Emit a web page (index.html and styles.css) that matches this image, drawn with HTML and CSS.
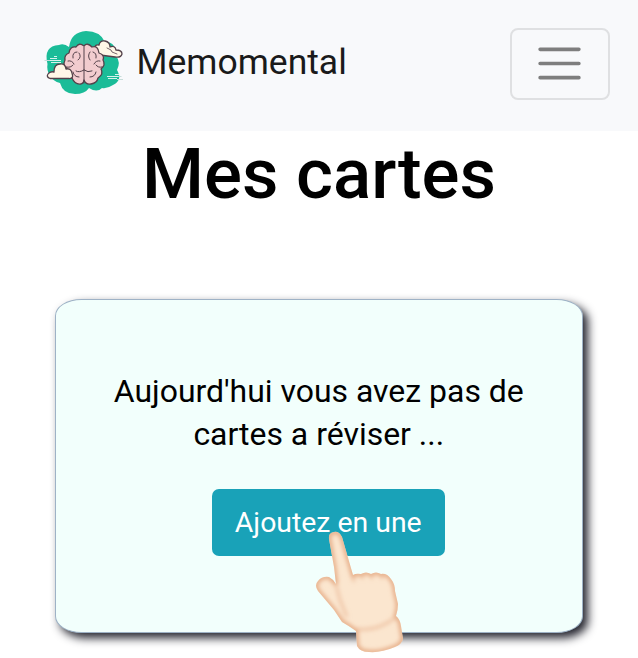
FILE: index.html
```html
<!DOCTYPE html>
<html lang="fr">
<head>
<meta charset="utf-8">
<title>Memomental</title>
<link rel="stylesheet" href="styles.css">
</head>
<body>
<header class="navbar">
  <a class="brand">
    <svg class="logo" viewBox="0 0 100 80" aria-hidden="true">
      <path fill="#1bbc98" d="M24 61C15 59 10 50 11.500 42Q7 24 23 23Q28 21 33 25Q35 10 50 9Q64 9 69 20Q80 19 80 34Q85 40 81 48Q87 58 77 63Q71 67 66 66Q61 71 53 66Q49 72 39 72Q27 72 24 61Z"/>
      <g stroke="#54414a" stroke-width="1.3" stroke-linejoin="round" stroke-linecap="round">
        <path fill="#fff7e7" d="M59 28Q58 22 63 23Q64 18 69 19Q74 20 74 25Q79 23 80 28Q86 28 86 32Q85 36 79 35L64 33Q59 32 59 28Z"/>
        <path fill="#f2cccf" d="M48 24Q43 20 40 25Q34 24 33 31Q28 33 29 38Q26 44 32 47Q31 54 36 56Q39 63 45 62Q48 61 48 58Q50 63 55 62Q61 61 62 56Q68 52 65 47Q70 43 67 38Q69 33 63 31Q62 23 56 25Q51 20 48 24Z"/>
        <path fill="none" stroke-width="1" d="M48 25V61M41 30Q36 30 37 36M43 31Q46 35 42 38M54 30Q51 34 54 38M57 30Q61 31 60 36M32 39Q36 38 38 42M30 45Q35 46 37 43M48 48Q43 51 40 49M48 48Q52 51 56 49M64 39Q60 38 58 42M66 45Q62 46 60 43M37 50Q38 55 43 55M60 50Q59 55 54 55"/>
        <path fill="#fff7e7" d="M14 56.500Q10 55 12 52Q14 49 18 50Q18 42 24 42Q29 41 30 47Q35 46 36 51Q38 57 33 56.500Z"/>
        <path fill="none" stroke-width=".8" d="M71 26L75 28L76 30L81 32"/>
      </g>
      <g fill="none" stroke-width="1">
        <path stroke="#c6dcd9" d="M8.500 38.500H14M82 54.500H85.500M81 57.500H87"/>
        <path stroke="#d8f2ec" d="M14 38.500H25M15 40.500H25M14 36.500H21M18 34.500H21M71 54.500H82M72 56.500H81M79 52.500H83"/>
      </g>
    </svg>
    <span class="brand-name">Memomental</span>
  </a>
  <button class="toggler" aria-label="Menu">
    <svg class="bars" viewBox="0 0 30 30" aria-hidden="true"><path stroke="#7e7e7e" stroke-linecap="round" stroke-miterlimit="10" stroke-width="2" d="M4 7h22M4 15h22M4 23h22"/></svg>
  </button>
</header>
<main>
  <h1 class="title">Mes cartes</h1>
  <section class="card">
    <p class="message">Aujourd'hui vous avez pas de<br>cartes a réviser ...</p>
    <a class="add">Ajoutez en une</a>
    <svg class="hand" viewBox="0 0 120 138" aria-hidden="true">
      <defs>
        <clipPath id="shape"><path id="outline" d="M29 19Q28 13 34 12Q39 11 42 17L53 55Q56 53 61 54Q66 51 71 54Q76 51 81 54Q87 53 91 59Q95 64 95 71L98 84Q98 90 96 96Q100 99 101 106L103 119Q102 124 95 127Q81 133 69 132Q60 132 57 126L56 111Q49 106 42 102L34 90L18 71Q14 65 18 61Q22 56 29 57Q33 59 36 64L34 47Z"/></clipPath>
        <filter id="soft" x="-20%" y="-20%" width="140%" height="140%"><feGaussianBlur stdDeviation="2.2"/></filter>
      </defs>
      <use href="#outline" fill="#fbe6cf"/>
      <g clip-path="url(#shape)">
        <g filter="url(#soft)" fill="none" stroke="#e5ab85">
          <use href="#outline" stroke-width="4.500"/>
          <path stroke-width="2.500" opacity=".65" d="M36 65L40 80L47 97M57 109Q77 112 96 97M53 55L54 62M61 54L63 59M71 54L72 59M81 54L82 59"/>
        </g>
      </g>
    </svg>
  </section>
</main>
</body>
</html>
```
FILE: styles.css
```css
* { box-sizing: border-box; }
body {
  margin: 0;
  height: 658px;
  overflow: hidden;
  background: #fff;
  color: #000;
  font-family: Roboto, "Liberation Sans", sans-serif;
}
.navbar {
  height: 131px;
  padding: 22px 28px 0 36px;
  display: flex;
  justify-content: space-between;
  align-items: flex-start;
  background: #f8f9fb;
}
.brand { display: flex; color: #1a1a1a; }
.logo { width: 100px; height: 80px; }
.brand-name {
  font-size: 35.5px;
  line-height: 53px;
  margin: 14px 0 0 0.5px;
}
.toggler {
  width: 100px;
  height: 72px;
  margin-top: 6px;
  padding: 0 1px 1px 0;
  display: flex;
  align-items: center;
  justify-content: center;
  border: 2px solid #dfe0e2;
  border-radius: 8px;
  background: transparent;
}
.bars { width: 53px; height: 53px; }
.title {
  margin: 0;
  font-size: 70.9px;
  font-weight: 500;
  line-height: 85px;
  text-align: center;
}
.card {
  position: relative;
  width: 527.5px;
  height: 334px;
  margin: 83px 0 0 55px;
  padding-top: 70px;
  display: flex;
  flex-direction: column;
  align-items: center;
  border: 1px solid #9eb2c6;
  border-radius: 5%;
  background: #f2fffc;
  box-shadow: 5px 5px 10px #24242e;
}
.message {
  margin: 0;
  font-size: 31.95px;
  line-height: 43px;
  text-align: center;
}
.add {
  width: 232.5px;
  height: 67px;
  margin: 33px 0 0 19px;
  border-radius: 7px;
  background: #19a2b8;
  color: #fff;
  font-size: 28.4px;
  line-height: 67px;
  text-align: center;
}
.hand {
  position: absolute;
  left: 244px;
  top: 220px;
  width: 120px;
  height: 138px;
}
```
